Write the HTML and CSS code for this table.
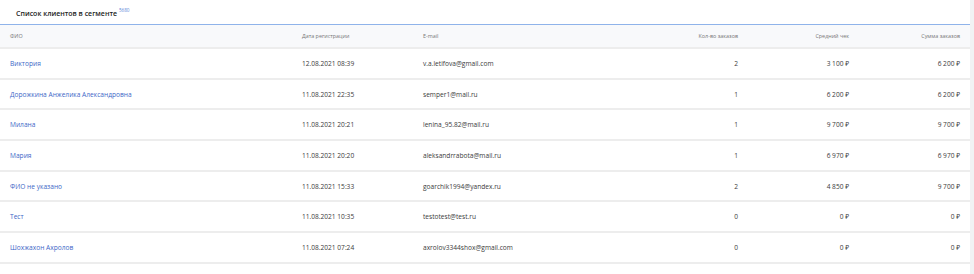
FILE: index.html
```html
<!DOCTYPE html>
<html lang="ru">
<head>
  <meta charset="UTF-8">
  <title>Список клиентов в сегменте</title>
  <link rel="stylesheet" href="styles.css">
</head>
<body>
  <div class="card">
    <div class="card-head">
      <h2 class="card-title">Список клиентов в сегменте <sup class="count">5680</sup></h2>
    </div>
    <table class="clients">
      <colgroup>
        <col class="c-name">
        <col class="c-date">
        <col class="c-mail">
        <col class="c-qty">
        <col class="c-avg">
        <col class="c-sum">
      </colgroup>
      <thead>
        <tr>
          <th>ФИО</th>
          <th>Дата регистрации</th>
          <th>E-mail</th>
          <th class="num">Кол-во заказов</th>
          <th class="num">Средний чек</th>
          <th class="num">Сумма заказов</th>
        </tr>
      </thead>
      <tbody>
        <tr>
          <td><a href="#">Виктория</a></td>
          <td>12.08.2021 08:39</td>
          <td>v.a.letifova@gmail.com</td>
          <td class="num">2</td>
          <td class="num">3 100 ₽</td>
          <td class="num">6 200 ₽</td>
        </tr>
        <tr>
          <td><a href="#">Дорожкина Анжелика Александровна</a></td>
          <td>11.08.2021 22:35</td>
          <td>semper1@mail.ru</td>
          <td class="num">1</td>
          <td class="num">6 200 ₽</td>
          <td class="num">6 200 ₽</td>
        </tr>
        <tr>
          <td><a href="#">Милана</a></td>
          <td>11.08.2021 20:21</td>
          <td>lenina_95.82@mail.ru</td>
          <td class="num">1</td>
          <td class="num">9 700 ₽</td>
          <td class="num">9 700 ₽</td>
        </tr>
        <tr>
          <td><a href="#">Мария</a></td>
          <td>11.08.2021 20:20</td>
          <td>aleksandrrabota@mail.ru</td>
          <td class="num">1</td>
          <td class="num">6 970 ₽</td>
          <td class="num">6 970 ₽</td>
        </tr>
        <tr>
          <td><a href="#">ФИО не указано</a></td>
          <td>11.08.2021 15:33</td>
          <td>goarchik1994@yandex.ru</td>
          <td class="num">2</td>
          <td class="num">4 850 ₽</td>
          <td class="num">9 700 ₽</td>
        </tr>
        <tr>
          <td><a href="#">Тест</a></td>
          <td>11.08.2021 10:35</td>
          <td>testotest@test.ru</td>
          <td class="num">0</td>
          <td class="num">0 ₽</td>
          <td class="num">0 ₽</td>
        </tr>
        <tr>
          <td><a href="#">Шохжахон Ахролов</a></td>
          <td>11.08.2021 07:24</td>
          <td>axrolov3344shox@gmail.com</td>
          <td class="num">0</td>
          <td class="num">0 ₽</td>
          <td class="num">0 ₽</td>
        </tr>
      </tbody>
    </table>
  </div>
</body>
</html>
```

FILE: styles.css
```css
/* Base */
* {
  margin: 0;
  padding: 0;
  box-sizing: border-box;
}
body {
  background: #f1f2f4;
  font-family: 'Open Sans', 'Noto Sans', sans-serif;
  color: #333;
}

/* Card */
.card {
  width: 970px;
  min-height: 274px;
  background: #fff;
}
.card-head {
  height: 25px;
  padding-left: 16px;
  border-bottom: 1px solid #8fb3ea;
  display: flex;
  align-items: center;
}
.card-title {
  font-size: 7px;
  font-weight: 600;
  color: #222;
}
.count {
  font-size: 4.6px;
  font-weight: 400;
  color: #5b84d8;
  vertical-align: 4px;
}

/* Table */
.clients {
  width: 100%;
  border-collapse: collapse;
  table-layout: fixed;
}
.c-name { width: 292px; }
.c-date { width: 121px; }
.c-mail { width: 214px; }
.c-qty { width: 121px; }
.c-avg { width: 111px; }
.c-sum { width: 111px; }

.clients th {
  height: 23px;
  padding: 0 10px;
  background: #f8f9fb;
  border-bottom: 2px solid #ededed;
  font-size: 5.4px;
  font-weight: 400;
  color: #777;
  text-align: left;
}
.clients td {
  height: 30.7px;
  padding: 0 10px;
  border-bottom: 2px solid #ededed;
  font-size: 6.6px;
  color: #3a3a3a;
  white-space: nowrap;
}
.clients .num {
  text-align: right;
}
.clients a {
  color: #3d67c7;
  text-decoration: none;
}
```
